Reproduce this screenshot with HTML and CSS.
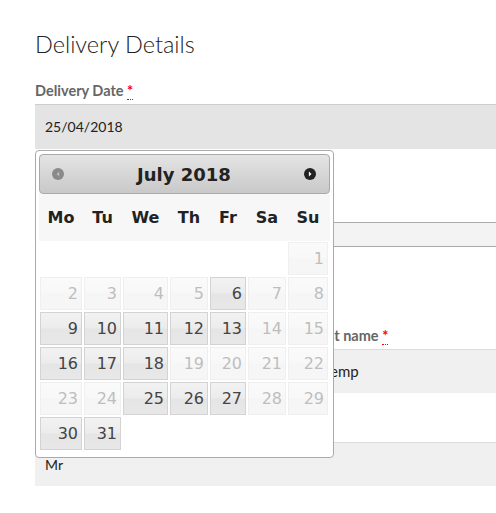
FILE: index.html
```html
<!DOCTYPE html>
<html lang="en">
<head>
<meta charset="utf-8">
<title>Delivery Details</title>
<link rel="stylesheet" href="styles.css">
</head>
<body>
<div class="page">
  <h1 class="heading">Delivery Details</h1>

  <div class="field">
    <label class="label" for="ddate">Delivery Date <abbr class="req" title="required">*</abbr></label>
    <input id="ddate" class="text focus" value="25/04/2018">
  </div>

  <div class="panel"></div>

  <div class="row">
    <div class="field">
      <span class="label"></span>
      <input class="text" aria-label="First name">
    </div>
    <div class="field">
      <label class="label" for="lname">Last name <abbr class="req" title="required">*</abbr></label>
      <input id="lname" class="text" value="Temp">
    </div>
  </div>

  <div class="field title-field">
    <input class="text" aria-label="Title" value="Mr">
  </div>

  <div class="datepicker">
    <div class="dp-header">
      <span class="dp-nav disabled" title="Prev">
        <svg width="12" height="12" viewBox="0 0 12 12"><circle cx="6" cy="6" r="6" fill="#8a8a8a"/><path d="M7.2 3.6 L4.6 6 L7.2 8.4 Z" fill="#bdbdbd"/></svg>
      </span>
      <span class="dp-title">July 2018</span>
      <span class="dp-nav" title="Next">
        <svg width="12" height="12" viewBox="0 0 12 12"><circle cx="6" cy="6" r="6" fill="#222"/><path d="M4.9 3.6 L7.5 6 L4.9 8.4 Z" fill="#fff"/></svg>
      </span>
    </div>
    <div class="dp-dow">
      <span>Mo</span><span>Tu</span><span>We</span><span>Th</span><span>Fr</span><span>Sa</span><span>Su</span>
    </div>
    <div class="dp-days">
      <span class="blank"></span><span class="blank"></span><span class="blank"></span><span class="blank"></span><span class="blank"></span><span class="blank"></span><span class="day off">1</span>
      <span class="day off">2</span><span class="day off">3</span><span class="day off">4</span><span class="day off">5</span><span class="day">6</span><span class="day off">7</span><span class="day off">8</span>
      <span class="day">9</span><span class="day">10</span><span class="day">11</span><span class="day">12</span><span class="day">13</span><span class="day off">14</span><span class="day off">15</span>
      <span class="day">16</span><span class="day">17</span><span class="day">18</span><span class="day off">19</span><span class="day off">20</span><span class="day off">21</span><span class="day off">22</span>
      <span class="day off">23</span><span class="day off">24</span><span class="day">25</span><span class="day">26</span><span class="day">27</span><span class="day off">28</span><span class="day off">29</span>
      <span class="day">30</span><span class="day">31</span>
    </div>
  </div>
</div>
</body>
</html>
```

FILE: styles.css
```css
* { box-sizing: border-box; }

html, body {
  margin: 0;
  background: #fff;
}

body {
  font-family: Lato, "Liberation Sans", sans-serif;
  color: #333;
  overflow: hidden;
}

.page {
  position: relative;
  padding: 30px 0 0 35px;
}

.heading {
  margin: 0 0 24px;
  font-size: 23.5px;
  line-height: 28px;
  font-weight: 300;
  color: #222;
}

.label {
  display: block;
  height: 18px;
  margin-bottom: 4px;
  font-size: 14.5px;
  line-height: 18px;
  font-weight: 700;
  color: #666;
}

.req {
  color: #f00;
  text-decoration: none;
  border-bottom: 1px dotted #f00;
}

.text {
  display: block;
  width: 100%;
  height: 44px;
  margin: 0;
  padding: 0 10px;
  border: 0;
  background: #f0f0f0;
  box-shadow: inset 0 1px 0 #dcdcdc;
  font: inherit;
  font-size: 14px;
  color: #222;
  outline: none;
}

.text.focus {
  height: 45px;
  background: #e4e4e4;
  box-shadow: inset 0 1px 0 #cdcdcd;
}

.panel {
  margin-top: 73px;
  height: 25px;
  border-top: 1px solid #a9a9a9;
  border-bottom: 1px solid #a9a9a9;
  background: #f3f3f3;
}

.row {
  display: grid;
  grid-template-columns: 270px 1fr;
  column-gap: 8px;
  margin-top: 80px;
}

.row .text {
  font-size: 15px;
}

.title-field {
  margin-top: 49px;
}

/* datepicker */
.datepicker {
  position: absolute;
  left: 35px;
  top: 150px;
  width: 299px;
  padding: 3px;
  border: 1px solid #aaa;
  border-radius: 4px;
  background: #fff;
  font-family: "DejaVu Sans", Verdana, sans-serif;
  color: #222;
}

.dp-header {
  display: flex;
  align-items: center;
  justify-content: space-between;
  height: 40px;
  padding: 0 13px 0 12px;
  border: 1px solid #aaa;
  border-radius: 4px;
  background: linear-gradient(#e4e4e4, #d6d6d6 50%, #c9c9c9);
}

.dp-nav {
  display: block;
  width: 12px;
  height: 12px;
}

.dp-nav svg { display: block; }

.dp-title {
  font-size: 18px;
  font-weight: 700;
  color: #222;
}

.dp-dow {
  display: grid;
  grid-template-columns: 42px 37px 45px 38px 36px 38px 40px;
  column-gap: 2px;
  align-items: center;
  height: 47px;
  padding: 0 1px;
  background: #f7f7f7;
  font-size: 16px;
  font-weight: 700;
  text-align: center;
}

.dp-days {
  display: grid;
  grid-template-columns: 42px 37px 45px 38px 36px 38px 40px;
  grid-auto-rows: 33px;
  gap: 2px;
  margin: 1px 0 4px;
  padding: 0 1px;
}

.day {
  display: block;
  padding-right: 3px;
  border: 1px solid #d3d3d3;
  background: linear-gradient(#f2f2f2, #ececec 48%, #e5e5e5 52%, #e8e8e8);
  font-size: 16px;
  line-height: 31px;
  text-align: right;
  color: #444;
}

.day.off {
  opacity: .35;
}
```
